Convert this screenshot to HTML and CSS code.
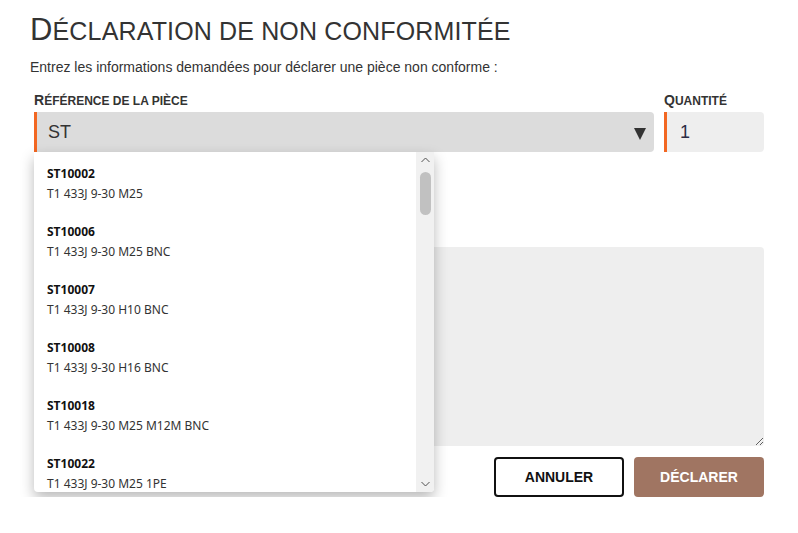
FILE: index.html
```html
<!DOCTYPE html>
<html lang="fr">
<head>
<meta charset="utf-8">
<title>Déclaration de non conformitée</title>
<link rel="stylesheet" href="styles.css">
</head>
<body>
<main class="page">
  <h1 class="title">Déclaration de non conformitée</h1>
  <p class="intro">Entrez les informations demandées pour déclarer une pièce non conforme :</p>
  <form class="form">
    <div class="row">
      <div class="field">
        <label class="label">Référence de la pièce</label>
        <div class="combo">
          <input class="control control-select" type="text" value="ST">
          <span class="caret"></span>
          <div class="dropdown">
            <ul class="options">
              <li class="option"><span class="code">ST10002</span><span class="desc">T1 433J 9-30 M25</span></li>
              <li class="option"><span class="code">ST10006</span><span class="desc">T1 433J 9-30 M25 BNC</span></li>
              <li class="option"><span class="code">ST10007</span><span class="desc">T1 433J 9-30 H10 BNC</span></li>
              <li class="option"><span class="code">ST10008</span><span class="desc">T1 433J 9-30 H16 BNC</span></li>
              <li class="option"><span class="code">ST10018</span><span class="desc">T1 433J 9-30 M25 M12M BNC</span></li>
              <li class="option option-last"><span class="code">ST10022</span><span class="desc">T1 433J 9-30 M25 1PE</span></li>
            </ul>
            <div class="scrollbar">
              <svg class="arrow arrow-up" width="9" height="6" viewBox="0 0 9 6"><polyline points="0.5,5 4.5,1 8.5,5" fill="none" stroke="#505050" stroke-width="1"/></svg>
              <div class="thumb"></div>
              <svg class="arrow arrow-down" width="9" height="6" viewBox="0 0 9 6"><polyline points="0.5,1 4.5,5 8.5,1" fill="none" stroke="#505050" stroke-width="1"/></svg>
            </div>
          </div>
        </div>
      </div>
      <div class="field">
        <label class="label">Quantité</label>
        <input class="control control-qty" type="text" value="1">
      </div>
    </div>
    <textarea class="comment"></textarea>
    <div class="actions">
      <button type="button" class="btn btn-cancel">Annuler</button>
      <button type="button" class="btn btn-submit">Déclarer</button>
    </div>
  </form>
</main>
</body>
</html>
```
FILE: styles.css
```css
* { box-sizing: border-box; }

body {
  margin: 0;
  background: #fff;
  font-family: "Liberation Sans", Arial, sans-serif;
  color: #333;
}

.page {
  padding: 12px 34px 0 30px;
}

.title {
  margin: 0;
  font-size: 25px;
  line-height: 36px;
  font-weight: normal;
  text-transform: uppercase;
  color: #333;
  letter-spacing: 0.15px;
}

.title::first-letter {
  font-size: 31px;
}

.intro {
  margin: 9px 0 0;
  font-size: 14px;
  line-height: 18px;
  color: #333;
}

.form {
  margin: 16px 0 0 4px;
}

.row {
  display: grid;
  grid-template-columns: 1fr 100px;
  column-gap: 10px;
}

.field {
  display: flex;
  flex-direction: column;
}

.label {
  font-size: 12px;
  line-height: 16px;
  font-weight: bold;
  text-transform: uppercase;
  color: #333;
  margin-bottom: 3px;
}

.label::first-letter {
  font-size: 14px;
}

.combo {
  position: relative;
}

.control {
  display: block;
  width: 100%;
  height: 40px;
  border: none;
  border-left: 3px solid #f26722;
  border-radius: 0 4px 4px 0;
  padding: 0 12px 0 11px;
  font-family: "Liberation Sans", Arial, sans-serif;
  font-size: 18px;
  color: #333;
  outline: none;
}

.control-select {
  background: #dcdcdc;
}

.control-qty {
  background: #eeeeee;
  padding-left: 13px;
  color: #2b2b45;
}

.caret {
  position: absolute;
  right: 8px;
  top: 16px;
  width: 0;
  height: 0;
  border-left: 6.5px solid transparent;
  border-right: 6.5px solid transparent;
  border-top: 12px solid #333;
}

.dropdown {
  position: absolute;
  left: 0;
  top: 40px;
  width: 400px;
  height: 340px;
  background: #fff;
  border-radius: 0 0 4px 4px;
  box-shadow: 0 6px 14px rgba(0, 0, 0, 0.28);
  overflow: hidden;
  z-index: 5;
}

.options {
  list-style: none;
  margin: 0;
  padding: 0;
  font-family: "Noto Sans", "Open Sans", sans-serif;
  font-size: 12px;
}

.option {
  display: flex;
  flex-direction: column;
  padding: 12px 13px 6px;
}

.option-last {
  padding-bottom: 0;
}

.code {
  line-height: 20px;
  font-weight: bold;
  color: #111;
}

.desc {
  line-height: 20px;
  color: #333;
}

.scrollbar {
  position: absolute;
  top: 0;
  right: 0;
  width: 18px;
  height: 100%;
  background: #f1f1f1;
}

.arrow {
  position: absolute;
  left: 5px;
}

.arrow-up { top: 5px; }
.arrow-down { bottom: 5px; }

.thumb {
  position: absolute;
  left: 4px;
  top: 20px;
  width: 11px;
  height: 43px;
  border-radius: 6px;
  background: #c1c1c1;
}

.comment {
  display: block;
  width: 100%;
  height: 199px;
  margin-top: 95px;
  border: none;
  border-radius: 4px;
  background: #eeeeee;
  resize: vertical;
  outline: none;
}

.actions {
  display: flex;
  justify-content: flex-end;
  gap: 10px;
  margin-top: 11px;
}

.btn {
  width: 130px;
  height: 40px;
  border-radius: 4px;
  font-family: "Liberation Sans", Arial, sans-serif;
  font-size: 14px;
  font-weight: bold;
  text-transform: uppercase;
  cursor: pointer;
}

.btn-cancel {
  background: #fff;
  border: 2px solid #111;
  color: #111;
}

.btn-submit {
  background: #a07562;
  border: none;
  color: #fff;
}
```
